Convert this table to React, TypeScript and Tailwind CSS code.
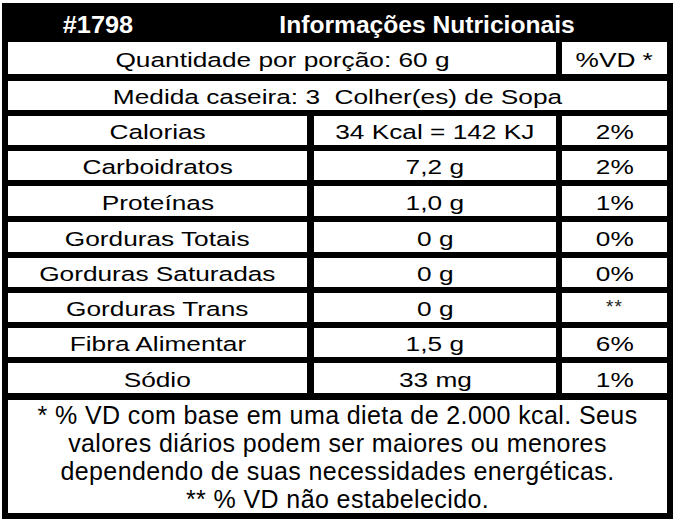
import React from "react";

const rows: [string, string, string, number][] = [
  ["Calorias", "34 Kcal = 142 KJ", "2%", 29],
  ["Carboidratos", "7,2 g", "2%", 29],
  ["Proteínas", "1,0 g", "1%", 30],
  ["Gorduras Totais", "0 g", "0%", 30],
  ["Gorduras Saturadas", "0 g", "0%", 29],
  ["Gorduras Trans", "0 g", "**", 29],
  ["Fibra Alimentar", "1,5 g", "6%", 29],
  ["Sódio", "33 mg", "1%", 30],
];

function T({ children }: { children: React.ReactNode }) {
  return <span className="inline-block whitespace-nowrap scale-x-[1.28]">{children}</span>;
}

export default function App() {
  return (
    <div className="w-[679px] h-[525px] bg-white pt-[3px] pl-[2px] font-['Liberation_Sans',Arial,sans-serif] text-black">
      <div className="w-[671px] h-[516px] bg-black p-[6px] flex flex-col">
        <div className="h-[33px] shrink-0 grid grid-cols-[180px_1fr] items-center text-white font-bold text-[23px] leading-none">
          <div className="flex justify-center">
            <span className="inline-block whitespace-nowrap scale-x-[1.1]">#1798</span>
          </div>
          <div className="flex justify-center">
            <span className="inline-block whitespace-nowrap scale-x-[1.07]">Informações Nutricionais</span>
          </div>
        </div>
        <div className="h-[32px] shrink-0 flex gap-[6px] text-[20.5px] leading-none">
          <div className="w-[548px] bg-white flex items-center justify-center pt-[4px]">
            <T>Quantidade por porção: 60 g</T>
          </div>
          <div className="flex-1 bg-white flex items-center justify-center pt-[4px]">
            <T>%VD *</T>
          </div>
        </div>
        <div className="mt-[7px] h-[29px] shrink-0 bg-white flex items-center justify-center pt-[4px] text-[20.5px] leading-none">
          <T>Medida caseira: 3&nbsp; Colher(es) de Sopa</T>
        </div>
        <div className="mt-[6px] flex flex-col gap-[6px] text-[20.5px] leading-none">
          {rows.map(([a, b, c, h]) => (
            <div key={a} className="flex shrink-0" style={{ height: h }}>
              <div className="w-[299px] bg-white flex items-center justify-center pt-[4px]">
                <T>{a}</T>
              </div>
              <div className="ml-[7px] w-[242px] bg-white flex items-center justify-center pt-[4px]">
                <T>{b}</T>
              </div>
              <div className="ml-[6px] flex-1 bg-white flex items-center justify-center pt-[4px]">
                {c === "**" ? (
                  <span className="text-[19px] text-[#222] -mt-[6px] tracking-[1px]">**</span>
                ) : (
                  <T>{c}</T>
                )}
              </div>
            </div>
          ))}
        </div>
        <div className="mt-[7px] h-[113px] shrink-0 bg-white flex flex-col items-center justify-center pt-[1px] text-[25px] leading-[28px] tracking-[0.4px]">
          <div className="whitespace-nowrap">* % VD com base em uma dieta de 2.000 kcal. Seus</div>
          <div className="whitespace-nowrap">valores diários podem ser maiores ou menores</div>
          <div className="whitespace-nowrap">dependendo de suas necessidades energéticas.</div>
          <div className="whitespace-nowrap">** % VD não estabelecido.</div>
        </div>
      </div>
    </div>
  );
}
